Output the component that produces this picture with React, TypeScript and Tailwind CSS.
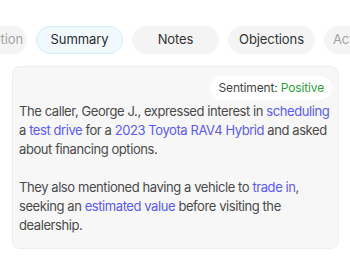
const tabs = [
    { label: "Conversation", edge: "left" },
    { label: "Summary", active: true },
    { label: "Notes" },
    { label: "Objections" },
    { label: "Action Items", edge: "right" },
];

function Link({ children }: { children: React.ReactNode }) {
    return <span className="text-[#5a5af3]">{children}</span>;
}

export default function App() {
    return (
        <div className="w-[350px] h-[262px] overflow-hidden bg-white" style={{ fontFamily: "Inter, 'Noto Sans', sans-serif" }}>
            {/* Tabs */}
            <div className="flex gap-[9px] pt-[26px] -ml-[60px] whitespace-nowrap">
                {tabs.map((t) => (
                    <div key={t.label}
                        className={`flex-shrink-0 h-[28px] w-[87px] overflow-hidden rounded-full flex items-center text-[13px] tracking-[-0.1px] border
              ${t.active
                                ? "bg-[#f1f9fe] border-[#d5ecfa] text-[#2b2b2b]"
                                : "bg-[#f4f4f4] border-[#f4f4f4] text-[#333333]"}
              ${t.edge === "left" ? "justify-end pr-[3px] text-[#a3a3a3]" : t.edge === "right" ? "justify-start pl-[8px] text-[#a3a3a3]" : "justify-center"}`}>
                        {t.label}
                    </div>
                ))}
            </div>

            {/* Summary card */}
            <div className="mx-[12px] mt-[12px] w-[327px] rounded-[8px] border border-[#eeeeee] bg-[#f7f7f7] px-[6px] pt-[9px] pb-[13px] flex flex-col">
                <div className="self-end h-[24px] px-2 rounded-full bg-white flex items-center text-[12px] tracking-[-0.15px] text-[#444444]">
                    Sentiment:&nbsp;<span className="text-[#2e9f3c]">Positive</span>
                </div>
                <div className="mt-[2px] text-[13px] leading-[19px] text-[#4a4a4a] tracking-[-0.42px]">
                    <p>
                        The caller, George J., expressed interest in <Link>scheduling</Link> a <Link>test drive</Link> for
                        a <Link>2023 Toyota RAV4 Hybrid</Link> and asked about financing options.
                    </p>
                    <p className="mt-[19px]">
                        They also mentioned having a vehicle to <Link>trade in</Link>, seeking an <Link>estimated value</Link> before
                        visiting the dealership.
                    </p>
                </div>
            </div>
        </div>
    );
}
